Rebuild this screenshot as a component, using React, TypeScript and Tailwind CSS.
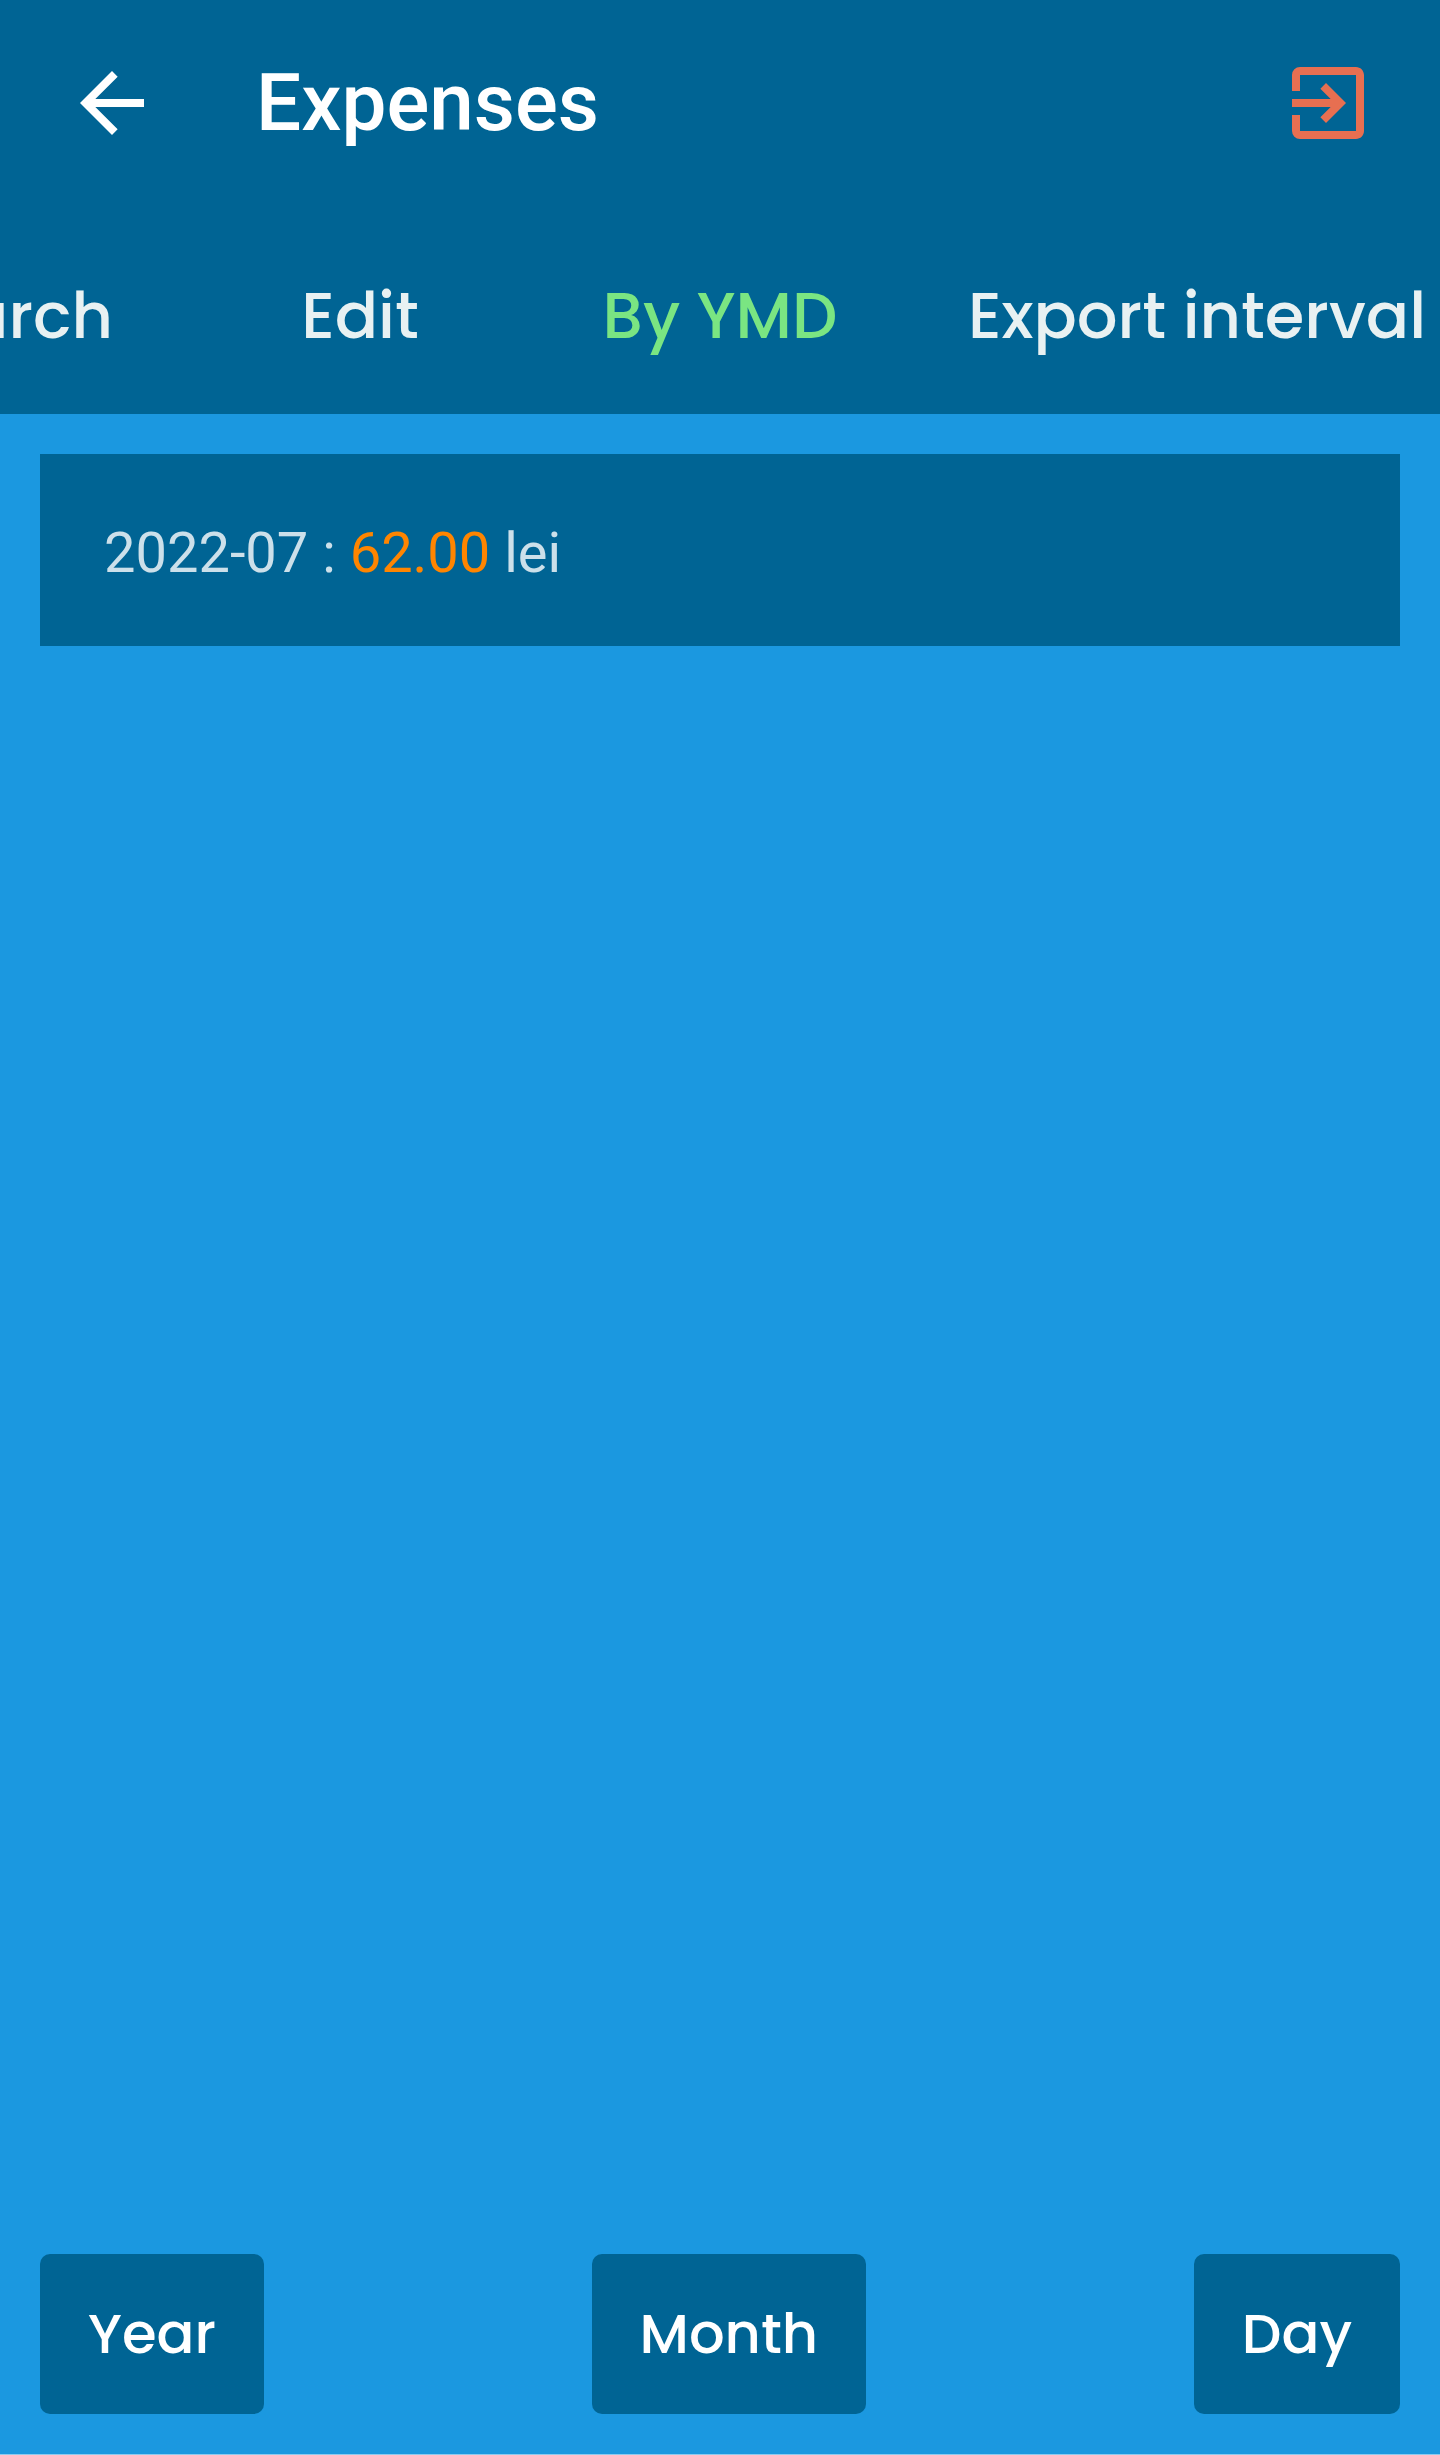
import { useState } from "react";
import { MdArrowBack, MdExitToApp } from "react-icons/md";

const tabs = [
  { label: "Search", width: "w-[360px]" },
  { label: "Edit", width: "w-[360px]" },
  { label: "By YMD", width: "w-[360px]" },
  { label: "Export interval", width: "w-[594px]" },
];

const periods = ["Year", "Month", "Day"];

export default function App() {
  const [active, setActive] = useState("By YMD");

  return (
    <div className="flex min-h-screen flex-col overflow-hidden border-b border-[#8dcbef] bg-[#1b98e0] font-['Roboto',sans-serif]">
      <header className="bg-[#006494]">
        <div className="flex h-[205px] items-center px-16">
          <button type="button" aria-label="Back" className="text-white">
            <MdArrowBack className="size-24" />
          </button>
          <h1 className="ml-24 flex-1 text-[80px] leading-[96px] font-medium text-white">Expenses</h1>
          <button type="button" aria-label="Sign out" className="text-[#e76f51]">
            <MdExitToApp className="size-24" />
          </button>
        </div>
        <nav className="-ml-[180px] flex h-[209px]" aria-label="Expense views">
          {tabs.map((tab) => (
            <button
              key={tab.label}
              type="button"
              aria-current={active === tab.label ? "page" : undefined}
              onClick={() => setActive(tab.label)}
              className={`${tab.width} shrink-0 pt-3 font-['Poppins','Inter',sans-serif] text-[64px] leading-[96px] font-medium whitespace-nowrap ${
                active === tab.label ? "text-[#7ae582]" : "text-[#e8f1f2]"
              }`}
            >
              {tab.label}
            </button>
          ))}
        </nav>
      </header>

      <main className="flex-1 p-10">
        <p className="flex h-48 items-center bg-[#006494] px-16 pt-1.5 text-[56px] leading-[66px] text-[#cce0ea]">
          <span>
            2022-07 : <span className="text-[#ff8500]">62.00</span> lei
          </span>
        </p>
      </main>

      <footer className="flex justify-between px-10 pb-10">
        {periods.map((period) => (
          <button
            key={period}
            type="button"
            className="h-40 rounded-[10px] bg-[#006494] px-12 font-['Poppins','Inter',sans-serif] text-[56px] leading-[84px] font-medium text-white"
          >
            {period}
          </button>
        ))}
      </footer>
    </div>
  );
}
